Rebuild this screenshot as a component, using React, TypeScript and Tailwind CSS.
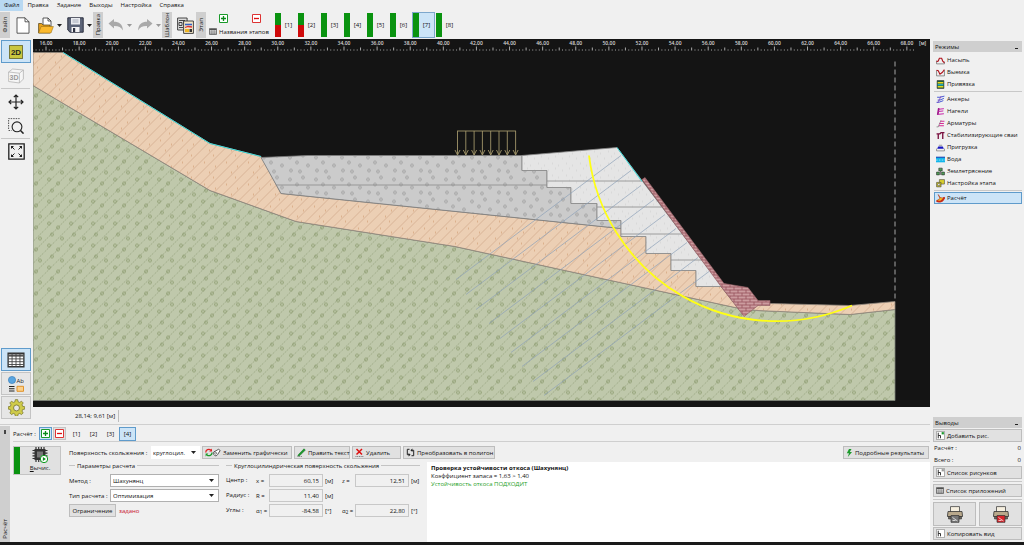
import type { ReactNode } from "react";
import { clsx } from "clsx";

const menu = ["Файл", "Правка", "Задание", "Выходы", "Настройка", "Справка"];

const stages = [
  { id: 1, failed: true },
  { id: 2, failed: true },
  { id: 3, failed: false },
  { id: 4, failed: false },
  { id: 5, failed: false },
  { id: 6, failed: false },
  { id: 7, failed: false },
  { id: 8, failed: false },
];

const ACTIVE_STAGE = 7;

/* ---------- icons ---------- */

function Svg({ className, box = "0 0 16 16", children }: { className: string; box?: string; children: ReactNode }) {
  return (
    <svg className={clsx("shrink-0", className)} viewBox={box} fill="none" aria-hidden="true">
      {children}
    </svg>
  );
}

const FileIcon = () => (
  <Svg className="h-[17px] w-[14px]" box="0 0 14 17">
    <path d="M1 .8h8l4 4v11.400H1z" fill="#fff" stroke="#333" strokeWidth=".8" />
    <path d="M9 .8v4h4" stroke="#333" strokeWidth=".8" />
  </Svg>
);

const FolderIcon = () => (
  <Svg className="h-[17px] w-4" box="0 0 16 17">
    <path d="M5 1h5l3 3v8H5z" fill="#fff" stroke="#333" strokeWidth=".8" />
    <path d="M10 1v3h3" stroke="#333" strokeWidth=".8" />
    <path d="M.6 16V6.500h3l1.500 1.500H12v8z" fill="#e8a21c" stroke="#4a3a10" strokeWidth=".7" />
    <path d="M.6 16l2.500-6.500h12.300L13 16z" fill="#fbb92d" stroke="#8a6410" strokeWidth=".5" />
  </Svg>
);

const SaveIcon = () => (
  <Svg className="h-4 w-[17px]" box="0 0 17 16">
    <path d="M.8.8h15.400v14.400H3L.8 13z" fill="#5b6377" stroke="#2d3140" strokeWidth="1" />
    <path d="M4 1h9v6.500H4z" fill="#e9ebf0" />
    <path d="M5.500 3h6M5.500 5h6" stroke="#8b90a0" strokeWidth=".7" />
    <path d="M4.500 10h8v5h-8z" fill="#f3f3f5" />
    <path d="M6 11h2.200v4H6z" fill="#2d3140" />
  </Svg>
);

const UndoIcon = ({ flip = false }) => (
  <Svg className={clsx("h-3 w-4", flip && "-scale-x-100")} box="0 0 16 12">
    <path d="M.5 4.500L6 0v2.800c5 0 8.500 2.200 9 8.700-1.800-3.300-4.500-4.600-9-4.500V9.500z" fill="#a9a9a9" />
  </Svg>
);

const TemplateIcon = () => (
  <Svg className="h-[17px] w-[17px]" box="0 0 17 17">
    <path d="M.6 1h9.500v12H.6z" fill="#ddd" stroke="#333" strokeWidth=".9" />
    <path d="M2 3.500h6M2 5.500h3v3H2zM6 6h2.500M2 10.500h4" stroke="#333" strokeWidth=".9" />
    <path d="M6.600 4h9.800v12.400H6.600z" fill="#f4e7c8" stroke="#333" strokeWidth=".9" />
    <path d="M8 7.500h7" stroke="#3460c4" strokeWidth="1.600" />
    <path d="M8 10.500l3-1 4 .5" stroke="#d33" strokeWidth="1.300" />
    <path d="M8 12h4v3H8z" fill="#eeb422" />
    <path d="M12.500 12H15v3h-2.500z" fill="#333" />
  </Svg>
);

const GridIcon = ({ className = "h-[7px] w-2" }) => (
  <Svg className={className} box="0 0 16 14">
    <path d="M1 1h14v12H1z" fill="#fff" stroke="#333" strokeWidth="1.200" />
    <path d="M1 3h14" stroke="#555" strokeWidth="2" />
    <path d="M1 6h14M1 8.500h14M1 11h14M4.500 1v12M8 1v12M11.500 1v12" stroke="#444" strokeWidth=".8" />
  </Svg>
);

const PlusBox = () => (
  <Svg className="size-[9px]" box="0 0 9 9">
    <path d="M.5.5h8v8h-8z" fill="#fff" stroke="#1a9a2a" />
    <path d="M4.500 2v5M2 4.500h5" stroke="#0a8a1a" strokeWidth="1.300" />
  </Svg>
);

const MinusBox = () => (
  <Svg className="size-[9px]" box="0 0 9 9">
    <path d="M.5.5h8v8h-8z" fill="#fff" stroke="#d33" />
    <path d="M2 4.500h5" stroke="#d11" strokeWidth="1.300" />
  </Svg>
);

const Caret = ({ color = "#222" }) => (
  <Svg className="h-[3px] w-[5px]" box="0 0 5 3">
    <path d="M0 0h5L2.500 3z" fill={color} />
  </Svg>
);

const MoveIcon = () => (
  <Svg className="size-4">
    <path d="M8 1v14M1 8h14M5.800 3.200L8 1l2.200 2.200M5.800 12.800L8 15l2.200-2.200M3.200 5.800L1 8l2.200 2.200M12.800 5.800L15 8l-2.200 2.200" stroke="#222" strokeWidth="1.200" />
  </Svg>
);

const ZoomIcon = () => (
  <Svg className="size-4">
    <path d="M.6 11V.6h11" stroke="#444" strokeWidth=".9" strokeDasharray="1.500 1" />
    <path d="M.6 12.500h3" stroke="#444" strokeWidth=".9" strokeDasharray="1.500 1" />
    <circle cx="9" cy="8.800" r="4.900" stroke="#222" strokeWidth="1.100" />
    <path d="M12.500 12.400l3 3.200" stroke="#222" strokeWidth="1.500" />
  </Svg>
);

const FitIcon = () => (
  <Svg className="size-[17px]" box="0 0 17 17">
    <path d="M.8.8h15.400v15.400H.8z" stroke="#222" strokeWidth="1.300" />
    <path d="M6.500 6.500L3.500 3.500M10.500 6.500l3-3M6.500 10.500l-3 3M10.500 10.500l3 3" stroke="#222" strokeWidth="1" />
    <path d="M3 6V3h3zM11 3h3v3zM3 11v3h3zM14 11v3h-3z" fill="#222" />
  </Svg>
);

const CubeIcon = () => (
  <Svg className="size-4">
    <path d="M.6 4l4-3 10.800 1v9l-4 4L.6 13.500zM.6 4l10.800 1.200V15M11.400 5.200L15.400 2" fill="#f6f6f6" stroke="#b5b5b5" strokeWidth=".8" />
    <text x="1.600" y="12" fontSize="7" fontWeight="700" fill="#9a9a9a" fontFamily="Liberation Sans">3D</text>
  </Svg>
);

const FlatIcon = () => (
  <Svg className="size-[14px]" box="0 0 14 14">
    <path d="M.4.4h13.200v13.200H.4z" fill="#c9c63e" stroke="#55531a" strokeWidth=".8" />
    <text x="7" y="9.800" textAnchor="middle" fontSize="8" fontWeight="700" fill="#222" fontFamily="Liberation Sans">2D</text>
  </Svg>
);

const LabelsIcon = () => (
  <Svg className="size-4">
    <circle cx="4" cy="4" r="3.600" fill="#5aa5e0" stroke="#2f77b5" strokeWidth=".6" />
    <text x="8.500" y="7" fontSize="6" fill="#222" fontFamily="Open Sans">Ab</text>
    <path d="M1 10.500h5.500M1 12.700h5.500M1 15h5.500" stroke="#222" strokeWidth="1.100" />
    <path d="M9 10.300h6.500v5H9z" fill="#fbd08a" stroke="#e08a1a" strokeWidth=".9" />
  </Svg>
);

const GearIcon = () => (
  <Svg className="size-[17px]">
    <path
      d="M6.900.6h2.200l.4 2 1.500.6 1.700-1.100 1.600 1.600-1.100 1.700.6 1.500 2 .4v2.200l-2 .4-.6 1.500 1.100 1.700-1.600 1.600-1.700-1.100-1.500.6-.4 2H6.900l-.4-2-1.500-.6-1.700 1.100-1.600-1.600 1.100-1.700-.6-1.500-2-.4V7.300l2-.4.6-1.500-1.100-1.700 1.600-1.600L5 3.200l1.500-.6z"
      fill="#cfcb4a"
      stroke="#77742a"
      strokeWidth=".7"
    />
    <circle cx="8" cy="8.400" r="2.800" fill="#e6e6e6" stroke="#77742a" strokeWidth=".8" />
  </Svg>
);

const ChipIcon = () => (
  <Svg className="size-4">
    <path d="M4 0v15M6.700 0v15M9.300 0v15M12 0v15M.5 3.500h15M.5 6.200h15M.5 8.800h15M.5 11.500h15" stroke="#333" strokeWidth="1.200" />
    <path d="M2.500 2h11v11h-11z" fill="#333" />
    <path d="M5 4.500h6v6H5z" fill="#777" />
    <circle cx="12" cy="12" r="3.700" fill="#fff" stroke="#0a9a1a" strokeWidth="1" />
    <path d="M10.900 10l3 2-3 2z" fill="#0a8a1a" />
  </Svg>
);

const SwapIcon = () => (
  <Svg className="h-[9px] w-4" box="0 0 16 9">
    <path d="M.8 4.500a3 3 0 0 1 5-2.400" stroke="#d22" strokeWidth="1.300" />
    <path d="M7 .5v3H4.200z" fill="#d22" />
    <path d="M7 4.500a3 3 0 0 1-5 2.400" stroke="#1a9a2a" strokeWidth="1.300" />
    <path d="M.6 8.500v-3h2.800z" fill="#1a9a2a" />
    <path d="M9 6.800a2 2 0 0 1 1-3.500l3.500-2 1.700 1.200-2.700 4.200a2 2 0 0 1-3.500.1z" fill="#fff" stroke="#333" strokeWidth=".8" />
    <circle cx="10.600" cy="5.200" r="1" stroke="#333" strokeWidth=".6" />
  </Svg>
);

const PencilIcon = () => (
  <Svg className="size-[9px]" box="0 0 9 9">
    <path d="M1.500 6.500L7 .8l1.300 1.300L2.800 7.600.8 8z" fill="#1a9a2a" stroke="#0b6a18" strokeWidth=".5" />
    <path d="M.5 8.600h5" stroke="#333" strokeWidth=".6" strokeDasharray="1 .7" />
  </Svg>
);

const CrossIcon = () => (
  <Svg className="size-[9px]" box="0 0 9 9">
    <path d="M1.500 1l5.500 5.500M7 1L1.500 6.500" stroke="#d11" strokeWidth="1.500" />
    <path d="M.5 8.500h8" stroke="#333" strokeWidth=".6" strokeDasharray="1 .7" />
  </Svg>
);

const PolygonIcon = () => (
  <Svg className="size-[9px]" box="0 0 9 9">
    <path d="M3.500 1.300H1.300v5.400H3M5.500 7.700h2.200V2.300H6" stroke="#222" strokeWidth="1" />
    <path d="M2.600 5l2 1.700-2 1.700zM6.400.6l-2 1.700 2 1.700z" fill="#222" />
  </Svg>
);

const BoltIcon = () => (
  <Svg className="h-2 w-[7px]" box="0 0 7 8">
    <path d="M3 0L.8 4.200H3L1.800 8 6 3H3.800L5.500 0z" fill="#1a9a2a" />
  </Svg>
);

const PrinterIcon = ({ sheet }: { sheet: string }) => (
  <Svg className="h-[17px] w-4" box="0 0 16 17">
    <path d="M3.500.6h9V7h-9z" fill="#f6efdf" stroke="#444" strokeWidth=".8" />
    <path d="M1 5.500h14l.6 5H.4z" fill="#b9a98c" stroke="#333" strokeWidth=".8" />
    <path d="M1.500 10.500h13v2.500h-13z" fill="#6b655b" stroke="#333" strokeWidth=".6" />
    <path d="M4 9.500h8v6.800H4z" fill={sheet} stroke="#333" strokeWidth=".7" />
    <path d="M5.500 11.500l5 3.500M5.500 14.500h3" stroke="#fff" strokeWidth=".7" />
  </Svg>
);

const FigureIcon = ({ dot = "#1a9a2a" }) => (
  <Svg className="size-[9px]" box="0 0 8 8">
    <path d="M.4.4h7.200v7.200H.4z" fill="#fff" stroke="#888" strokeWidth=".6" />
    <path d="M2 1.500v5M2 4h2v2.500" stroke="#222" strokeWidth=".8" />
    <path d="M5 1h2v2H5z" fill={dot} />
  </Svg>
);

/* ---------- small controls ---------- */

function ToolTab({ label }: { label: string }) {
  return (
    <div className="flex h-[26px] w-[10px] shrink-0 items-center justify-center overflow-hidden bg-[#cfcfcf]">
      <span className="rotate-180 whitespace-nowrap [writing-mode:vertical-rl]">{label}</span>
    </div>
  );
}

function ActionButton({ icon, children, className }: { icon?: ReactNode; children: ReactNode; className?: string }) {
  return (
    <button
      type="button"
      className={clsx(
        "flex h-[13px] items-center gap-[2px] whitespace-nowrap border border-[#bdbdbd] bg-[#e1e1e1] px-[2px]",
        className
      )}
    >
      {icon}
      {children}
    </button>
  );
}

function Select({ id, value, className }: { id: string; value: string; className: string }) {
  return (
    <div className={clsx("relative h-[13px]", className)}>
      <select id={id} defaultValue={value} className="size-full appearance-none bg-white pl-[2px] outline-none">
        <option>{value}</option>
      </select>
      <span className="pointer-events-none absolute inset-y-0 right-1 flex items-center">
        <Caret />
      </span>
    </div>
  );
}

function NumberField({ id, label, value, unit }: { id: string; label: ReactNode; value: string; unit: string }) {
  return (
    <div className="flex items-center">
      <label htmlFor={id} className="w-[13px] whitespace-nowrap">{label}</label>
      <input
        id={id}
        readOnly
        defaultValue={value}
        className="h-[13px] w-[54px] border border-[#c8c8c8] bg-[#f0f0f0] pr-[3px] text-right outline-none"
      />
      <span className="ml-[2px] w-[10px]">{unit}</span>
    </div>
  );
}

function Legend({ children }: { children: ReactNode }) {
  return (
    <div className="flex h-[13px] items-center gap-[2px]">
      <span className="h-px w-[6px] bg-[#c4c4c4]" />
      <span className="whitespace-nowrap">{children}</span>
      <span className="h-px flex-1 bg-[#c4c4c4]" />
    </div>
  );
}

/* ---------- page sections ---------- */

function Toolbar() {
  return (
    <div className="flex h-[28px] items-center">
      <ToolTab label="Файл" />
      <div className="flex w-[83px] items-center pl-[6px]">
        <button type="button" aria-label="Новый"><FileIcon /></button>
        <button type="button" aria-label="Открыть" className="ml-2 flex items-center gap-[3px]"><FolderIcon /><Caret /></button>
        <button type="button" aria-label="Сохранить" className="ml-[5px] flex items-center gap-[3px]"><SaveIcon /><Caret /></button>
      </div>
      <ToolTab label="Правка" />
      <div className="flex w-[59px] items-center gap-[5px] pl-[5px]">
        <button type="button" aria-label="Назад" className="flex items-center gap-[3px]"><UndoIcon /><Caret color="#999" /></button>
        <button type="button" aria-label="Вперёд" className="flex items-center gap-[3px]"><UndoIcon flip /><Caret color="#999" /></button>
      </div>
      <ToolTab label="Шаблон" />
      <button type="button" aria-label="Шаблон" className="ml-[5px] mr-[2px]"><TemplateIcon /></button>
      <ToolTab label="Этап" />
      <div className="flex w-[68px] flex-col gap-1 pl-[3px]">
        <div className="flex gap-6 pl-[10px]">
          <button type="button" aria-label="Добавить этап"><PlusBox /></button>
          <button type="button" aria-label="Удалить этап"><MinusBox /></button>
        </div>
        <button type="button" className="flex items-center gap-[2px] whitespace-nowrap leading-[10px]">
          <GridIcon />
          Названия этапов
        </button>
      </div>
      <div className="flex">
        {stages.map((stage) => (
          <button
            key={stage.id}
            type="button"
            className={clsx(
              "flex h-[26px] w-[23px] items-center border",
              stage.id === ACTIVE_STAGE ? "border-[#7da7cc] bg-[#cce4f7]" : "border-transparent"
            )}
          >
            <span className="flex h-6 w-[6px] flex-col">
              <span className="flex-1 bg-[#0a9310]" />
              {stage.failed && <span className="flex-1 bg-[#cf0a0a]" />}
            </span>
            <span className="flex-1 text-center">[{stage.id}]</span>
          </button>
        ))}
      </div>
    </div>
  );
}

function SideButton({ label, active, framed, children }: { label: string; active?: boolean; framed?: boolean; children: ReactNode }) {
  return (
    <button
      type="button"
      aria-label={label}
      className={clsx(
        "flex h-[23px] w-[30px] items-center justify-center border",
        active ? "border-[#5f9bcb] bg-[#cce4f7]" : framed ? "border-[#c4c4c4] bg-[#e6e6e6]" : "border-transparent"
      )}
    >
      {children}
    </button>
  );
}

function ViewBar() {
  return (
    <aside className="flex w-[33px] shrink-0 flex-col gap-px px-px pt-px">
      <SideButton label="2D" active><FlatIcon /></SideButton>
      <SideButton label="3D"><CubeIcon /></SideButton>
      <hr className="w-[29px] border-[#c8c8c8]" />
      <SideButton label="Сдвиг"><MoveIcon /></SideButton>
      <SideButton label="Лупа"><ZoomIcon /></SideButton>
      <hr className="w-[29px] border-[#c8c8c8]" />
      <SideButton label="Показать всё"><FitIcon /></SideButton>
      <div className="-mb-3 mt-auto flex flex-col gap-px">
        <SideButton label="Таблицы" active><GridIcon className="h-4 w-[18px]" /></SideButton>
        <SideButton label="Обозначения" framed><LabelsIcon /></SideButton>
        <SideButton label="Параметры" framed><GearIcon /></SideButton>
      </div>
    </aside>
  );
}

const RULER_X0 = 46;
const UNIT = 16.555;
const rulerLabels = Array.from({ length: 27 }, (_, i) => 16 + i * 2);
const rulerTicks = Array.from({ length: 267 }, (_, i) => i - 4);

// nails: head on the slope face, all share one direction
const nails = [
  [621, 156], [631, 171], [641, 186], [654, 200], [665, 215],
  [676, 229], [687, 243], [698, 258], [709, 272],
];

function SlopeView() {
  return (
    <svg
      className="min-h-0 w-full flex-1 bg-[#141414]"
      viewBox="33 40 897 367"
      role="img"
      aria-label="Расчётная схема откоса"
      fontFamily="Open Sans, sans-serif"
    >
      <defs>
        <pattern id="clay" width="22" height="22" patternUnits="userSpaceOnUse">
          <path d="M-1 12L12-1M-1 23L23-1M10 23L23 10" stroke="#98a580" strokeWidth=".8" strokeDasharray="2 .8" />
          <g fill="none" stroke="#7b8d5a" strokeWidth=".6">
            <circle cx="5" cy="4" r="1.500" />
            <circle cx="14" cy="8" r="1.500" />
            <circle cx="8" cy="15" r="1.500" />
            <circle cx="18" cy="19" r="1.500" />
          </g>
        </pattern>
        <pattern id="loam" width="22" height="22" patternUnits="userSpaceOnUse">
          <path d="M-1 12L12-1M-1 23L23-1M10 23L23 10" stroke="#cfa888" strokeWidth=".7" />
          <path d="M6 9h1M17 13h1M11 19h1M15 2h1" stroke="#c08050" strokeWidth=".8" />
        </pattern>
        <pattern id="gravel" width="26" height="22" patternUnits="userSpaceOnUse">
          <g fill="none" stroke="#8a8a8a" strokeWidth=".6">
            <circle cx="4" cy="4" r="1.400" />
            <circle cx="17" cy="2" r="1.400" />
            <circle cx="11" cy="9" r="1.400" />
            <circle cx="22" cy="12" r="1.400" />
            <circle cx="5" cy="17" r="1.400" />
            <circle cx="14" cy="18" r="1.400" />
          </g>
        </pattern>
        <pattern id="sand" width="14" height="12" patternUnits="userSpaceOnUse">
          <path d="M2 3h.7M9 1h.7M6 8h.7M12 10h.7" stroke="#aaa" strokeWidth=".6" />
        </pattern>
        <pattern id="brick" width="8" height="6" patternUnits="userSpaceOnUse" patternTransform="translate(0 2)">
          <path d="M0 .5h8M0 3.500h8M2 .5v3M6 3.500v3" stroke="#8c4550" strokeWidth=".7" />
        </pattern>
      </defs>

      {rulerLabels.map((n) => (
        <text key={n} x={RULER_X0 + (n - 16) * UNIT} y="45.500" fontSize="5" fontWeight="600" textAnchor="middle" fill="#d6d6d6">
          {n},00
        </text>
      ))}
      <text x="919" y="45.500" fontSize="5" fontWeight="600" fill="#d6d6d6">[м]</text>
      {rulerTicks.map((i) => {
        const x = RULER_X0 + (i * UNIT) / 5;
        const top = i % 10 === 0 ? 47 : i % 5 === 0 ? 48 : 50;
        return <path key={i} d={`M${x} ${top}V51`} stroke="#cfcfcf" strokeWidth=".8" />;
      })}

      <g strokeLinejoin="round">
        <path d="M33 86L210 191 296 222 455 247 620 283 735 308 757 311 850 315 895 310V401H33z" fill="#bfc8ab" />
        <path d="M33 86L210 191 296 222 455 247 620 283 735 308 757 311 850 315 895 310V401H33z" fill="url(#clay)" stroke="#7e8378" strokeWidth=".8" />
        <path d="M33 53H63L210 144 261 157 281 194 621 229V237H646V254H671V271H696V287H721L744 316 757 305 770 304 850 306 895 302V310L850 315 757 311 735 308 620 283 455 247 296 222 210 191 33 86z" fill="#eccfb4" />
        <path d="M33 53H63L210 144 261 157 281 194 621 229V237H646V254H671V271H696V287H721L744 316 757 305 770 304 850 306 895 302V310L850 315 757 311 735 308 620 283 455 247 296 222 210 191 33 86z" fill="url(#loam)" stroke="#8f877c" strokeWidth=".8" />
        <path d="M261 158L308 156H522V171H547V188H571V204H597V221H621V229L281 194z" fill="#cbcbcb" />
        <path d="M261 158L308 156H522V171H547V188H571V204H597V221H621V229L281 194z" fill="url(#gravel)" stroke="#7d7d7d" strokeWidth=".8" />
        <path d="M522 156L617 148 722 287H696V271H671V254H646V237H621V221H597V204H571V188H547V171H522z" fill="#e5e5e5" />
        <path d="M522 156L617 148 722 287H696V271H671V254H646V237H621V221H597V204H571V188H547V171H522z" fill="url(#sand)" stroke="#8a8a8a" strokeWidth=".8" />
        <path d="M276 185.500H547M547 181.500H642M597 207.500H662M621 234.500H682M671 260.500H702" stroke="#8a8a8a" strokeWidth=".8" />
      </g>

      {nails.map(([x, y]) => (
        <path key={x} d={`M${x} ${y}l-165 124`} stroke="#8ca0b8" strokeWidth=".7" />
      ))}

      <path d="M642 180L645 178 724 284 748 288 758 301H770V306H758L744 317 721 287z" fill="#cc9c9f" />
      <path d="M642 180L645 178 724 284 748 288 758 301H770V306H758L744 317 721 287z" fill="url(#brick)" stroke="#8c5a60" strokeWidth=".6" />

      <path d="M63 53L210 144 261 157M617 148L642 182" fill="none" stroke="#3fe0e0" strokeWidth="1" />
      <path d="M589 156A189 189 0 0 0 852 306" fill="none" stroke="#ffff14" strokeWidth="1.800" />

      <path d="M457 131.500H516" stroke="#a2956a" strokeWidth=".9" />
      {Array.from({ length: 8 }, (_, i) => (
        <path key={i} d={`M${457.5 + i * 8.3} 131.500v24m-2.500-5l2.500 5 2.500-5`} fill="none" stroke="#a2956a" strokeWidth=".9" />
      ))}
      <path d="M895 62V302" stroke="#b5b5b5" strokeWidth=".9" strokeDasharray="5 3" />
    </svg>
  );
}

function CalcPanel() {
  return (
    <section className="flex h-[118px] shrink-0 border-t border-[#cfcfcf] pt-px">
      <div className="flex w-[10px] shrink-0 flex-col items-center justify-between bg-[#cfcfcf] py-[3px]">
        <span className="mt-px h-1 w-[2px] bg-[#444]" />
        <span className="rotate-180 whitespace-nowrap [writing-mode:vertical-rl]">Расчёт</span>
      </div>
      <div className="flex min-w-0 flex-1 flex-col pl-[3px]">
        <div className="flex h-4 items-center border-b border-[#cfcfcf]">
          <span className="w-[26px] whitespace-nowrap">Расчёт :</span>
          <button type="button" aria-label="Добавить расчёт" className="flex size-[13px] items-center justify-center border border-[#5f9bcb] bg-[#cce4f7]"><PlusBox /></button>
          <button type="button" aria-label="Удалить расчёт" className="ml-px flex size-[13px] items-center justify-center border border-[#c4c4c4] bg-[#e1e1e1]"><MinusBox /></button>
          <div className="ml-[2px] flex">
            {[1, 2, 3, 4].map((n) => (
              <button
                key={n}
                type="button"
                className={clsx("h-[14px] w-[17px] border", n === 4 ? "border-[#5f9bcb] bg-[#cce4f7]" : "border-transparent")}
              >
                [{n}]
              </button>
            ))}
          </div>
        </div>
        <div className="flex min-h-0 flex-1 gap-2 pt-1">
          <button type="button" className="flex h-[29px] w-12 shrink-0 border border-[#c4c4c4] bg-[#e1e1e1]">
            <span className="h-full w-[6px] bg-[#0a9310]" />
            <span className="flex flex-1 flex-col items-center">
              <ChipIcon />
              <span className="leading-[10px]"><u>В</u>ычис.</span>
            </span>
          </button>
          <div className="flex min-w-0 flex-1 flex-col">
            <div className="flex items-center gap-[2px] pr-px">
              <label htmlFor="surface" className="w-20 whitespace-nowrap">Поверхность скольжения :</label>
              <Select id="surface" value="круглоцил." className="w-[49px]" />
              <ActionButton icon={<SwapIcon />} className="w-[90px]">Заменить графически</ActionButton>
              <ActionButton icon={<PencilIcon />} className="w-[56px]">Править текст</ActionButton>
              <ActionButton icon={<CrossIcon />} className="w-[49px]">Удалить</ActionButton>
              <ActionButton icon={<PolygonIcon />} className="w-[92px]">Преобразовать в полигон</ActionButton>
              <ActionButton icon={<BoltIcon />} className="ml-auto w-[86px]">Подробные результаты</ActionButton>
            </div>
            <div className="flex min-h-0 flex-1">
              <div className="flex w-[150px] shrink-0 flex-col gap-[2px]">
                <Legend>Параметры расчета</Legend>
                <div className="flex items-center">
                  <label htmlFor="method" className="w-[41px] whitespace-nowrap">Метод :</label>
                  <Select id="method" value="Шахунянц" className="flex-1 border border-[#b0b0b0]" />
                </div>
                <div className="flex items-center">
                  <label htmlFor="kind" className="w-[41px] whitespace-nowrap">Тип расчета :</label>
                  <Select id="kind" value="Оптимизация" className="flex-1 border border-[#b0b0b0]" />
                </div>
                <div className="flex items-center gap-[3px]">
                  <ActionButton className="w-[47px] justify-center">Ограничение</ActionButton>
                  <span className="text-[#c8102e]">задано</span>
                </div>
              </div>
              <div className="ml-[7px] flex w-[194px] shrink-0 flex-col gap-[2px]">
                <Legend>Круглоцилиндрическая поверхность скольжения</Legend>
                <div className="grid grid-cols-[30px_86px_80px] gap-y-[2px]">
                  <span className="leading-[13px]">Центр :</span>
                  <NumberField id="cx" label="x =" value="60,15" unit="[м]" />
                  <NumberField id="cz" label="z =" value="12,51" unit="[м]" />
                  <span className="col-start-1 leading-[13px]">Радиус :</span>
                  <NumberField id="radius" label="R =" value="11,40" unit="[м]" />
                  <span className="col-start-1 leading-[13px]">Углы :</span>
                  <NumberField id="a1" label={<>α<sub>1</sub> =</>} value="-84,58" unit="[°]" />
                  <NumberField id="a2" label={<>α<sub>2</sub> =</>} value="22,80" unit="[°]" />
                </div>
              </div>
              <div className="ml-[7px] mt-[3px] min-w-0 flex-1 bg-white px-1 pt-[2px] leading-[8px]">
                <p className="font-bold">Проверка устойчивости откоса (Шахунянц)</p>
                <p>Коэффициент запаса = 1,63 &gt; 1,40</p>
                <p className="text-[#1fa01f]">Устойчивость откоса ПОДХОДИТ</p>
              </div>
            </div>
          </div>
        </div>
      </div>
    </section>
  );
}

const modes: { label: string; icon: ReactNode }[][] = [
  [
    { label: "Насыпь", icon: <><path d="M1 8v6h14v-4" stroke="#444" /><path d="M1 10l3-1 2-5h4l2 5 3 3" stroke="#b0141e" strokeWidth="2" /></> },
    { label: "Выемка", icon: <><path d="M1 4v10h14V4" stroke="#444" /><path d="M1 4l3 1 3 6 4-3 4-5" stroke="#b0141e" strokeWidth="2" /></> },
    { label: "Привязка", icon: <><path d="M2 1h12v14H2z" fill="#1b5e3a" stroke="#222" /><path d="M3 5h10M3 12h10" stroke="#e8d820" strokeWidth="2.500" /><path d="M3 8.500h10" stroke="#29b3c9" strokeWidth="2.500" /></> },
  ],
  [
    { label: "Анкеры", icon: <><path d="M2 4h5l8-2M1 13h4l8-3M3 9h4l7-3" stroke="#2b3fd0" strokeWidth="1.500" /><path d="M3 14L9 2" stroke="#7d3bb8" strokeWidth="1.300" /></> },
    { label: "Нагели", icon: <><path d="M5 2L3 14" stroke="#9b1688" strokeWidth="3" /><path d="M5 4l9-1M4 8l9-1M4 13l10-1" stroke="#c419a4" strokeWidth="1.700" /></> },
    { label: "Арматуры", icon: <><path d="M1 14h3L9 2" stroke="#555" /><path d="M8 4h7M6 8h8M5 12h9" stroke="#d4208f" strokeWidth="1.700" /></> },
    { label: "Стабилизирующие сваи", icon: <><path d="M1 5h6l2-2h6M4 5v9M12 3v11" stroke="#7a1240" strokeWidth="2.400" /></> },
    { label: "Пригрузка", icon: <><path d="M4 6h8l2 4H2z" fill="#1616c0" /><path d="M1 10v4h14v-4M5 4h6" stroke="#555" /></> },
    { label: "Вода", icon: <><path d="M0 4h16v9H0z" fill="#12b6ea" /><path d="M0 4h16" stroke="#1b49b8" strokeWidth="2" /><path d="M0 9h16" stroke="#fff" strokeDasharray="3 2" /></> },
    { label: "Землетрясение", icon: <><path d="M5 2h6v5H5zM1 9h5v5H1zM10 9h5v5h-5z" fill="#52a05a" stroke="#222" /><path d="M8 7v7" stroke="#222" /></> },
    { label: "Настройка этапа", icon: <><path d="M6 1h9v8H6z" fill="#d9cf2c" stroke="#444" /><path d="M1 6h8v8H1z" fill="#c9be1c" stroke="#444" /><circle cx="5" cy="10" r="2" fill="#fff" stroke="#444" /></> },
  ],
  [
    { label: "Расчёт", icon: <><path d="M4 1l3 7-6 4c4 4 13 3 14-6l-4 1-4-1z" fill="#f3c21b" stroke="#b02a12" /><path d="M1 12c5 3 11 1 14-6" stroke="#c9281a" strokeWidth="3" /></> },
  ],
];

function PanelTitle({ children }: { children: ReactNode }) {
  return (
    <h2 className="flex h-[11px] items-center justify-between bg-[#cfcfcf] px-[2px]">
      {children}
      <span className="mr-[2px] mt-1 h-px w-[3px] bg-[#222]" />
    </h2>
  );
}

function ModesPanel() {
  return (
    <aside className="flex w-[94px] shrink-0 flex-col justify-between pl-[3px] pr-[2px]">
      <div>
        <div className="pt-[2px]"><PanelTitle>Режимы</PanelTitle></div>
        <nav className="flex flex-col gap-px pl-px pt-[2px]">
          {modes.map((group, g) => (
            <div key={g} className={clsx("flex flex-col", g > 0 && "border-t border-[#c8c8c8] pt-px")}>
              {group.map(({ label, icon }) => (
                <a
                  key={label}
                  href="#"
                  className={clsx(
                    "flex h-3 items-center gap-[2px] whitespace-nowrap border px-px",
                    label === "Расчёт" ? "border-[#5f9bcb] bg-[#cce4f7]" : "border-transparent"
                  )}
                >
                  <Svg className="size-[9px]">{icon}</Svg>
                  {label}
                </a>
              ))}
            </div>
          ))}
        </nav>
      </div>
      <div className="flex flex-col pb-[2px]">
        <PanelTitle>Выводы</PanelTitle>
        <ActionButton icon={<FigureIcon />} className="mt-px w-full">Добавить рис.</ActionButton>
        <dl className="grid grid-cols-2 px-px leading-[12px]">
          <dt>Расчёт :</dt>
          <dd className="text-right">0</dd>
          <dt>Всего :</dt>
          <dd className="text-right">0</dd>
        </dl>
        <ActionButton icon={<FigureIcon dot="#999" />} className="w-full">Список рисунков</ActionButton>
        <hr className="my-[2px] border-[#c8c8c8]" />
        <ActionButton icon={<GridIcon />} className="w-full">Список приложений</ActionButton>
        <hr className="my-[2px] border-[#c8c8c8]" />
        <div className="flex gap-[3px]">
          <button type="button" aria-label="Печать" className="flex h-6 flex-1 items-center justify-center border border-[#bdbdbd] bg-[#e1e1e1]"><PrinterIcon sheet="#777" /></button>
          <button type="button" aria-label="Печать в отчёт" className="flex h-6 flex-1 items-center justify-center border border-[#bdbdbd] bg-[#e1e1e1]"><PrinterIcon sheet="#d8232a" /></button>
        </div>
        <ActionButton icon={<FigureIcon dot="#fff" />} className="mt-px w-full">Копировать вид</ActionButton>
      </div>
    </aside>
  );
}

export default function App() {
  return (
    <div className="flex h-screen flex-col bg-[#f0f0f0] font-['Open_Sans',sans-serif] text-[6px] font-medium leading-[10px] text-[#111]">
      <nav className="flex h-[11px]">
        {menu.map((item, i) => (
          <a key={item} href="#" className={clsx("px-1", i === 0 && "bg-[#b9d9f2]")}>
            {item}
          </a>
        ))}
      </nav>
      <Toolbar />
      <div className="flex min-h-0 flex-1">
        <main className="flex min-w-0 flex-1 flex-col">
          <div className="flex min-h-0 flex-1">
            <ViewBar />
            <div className="flex min-w-0 flex-1 flex-col">
              <SlopeView />
            </div>
          </div>
          <div className="flex h-[17px] shrink-0 items-center pl-[75px]">
            <span className="flex h-3 w-11 items-center whitespace-nowrap border-r border-[#bdbdbd]">28,14; 9,61 [м]</span>
          </div>
          <CalcPanel />
        </main>
        <ModesPanel />
      </div>
      <div className="h-[3px] bg-[#1a1a1a]" />
    </div>
  );
}
